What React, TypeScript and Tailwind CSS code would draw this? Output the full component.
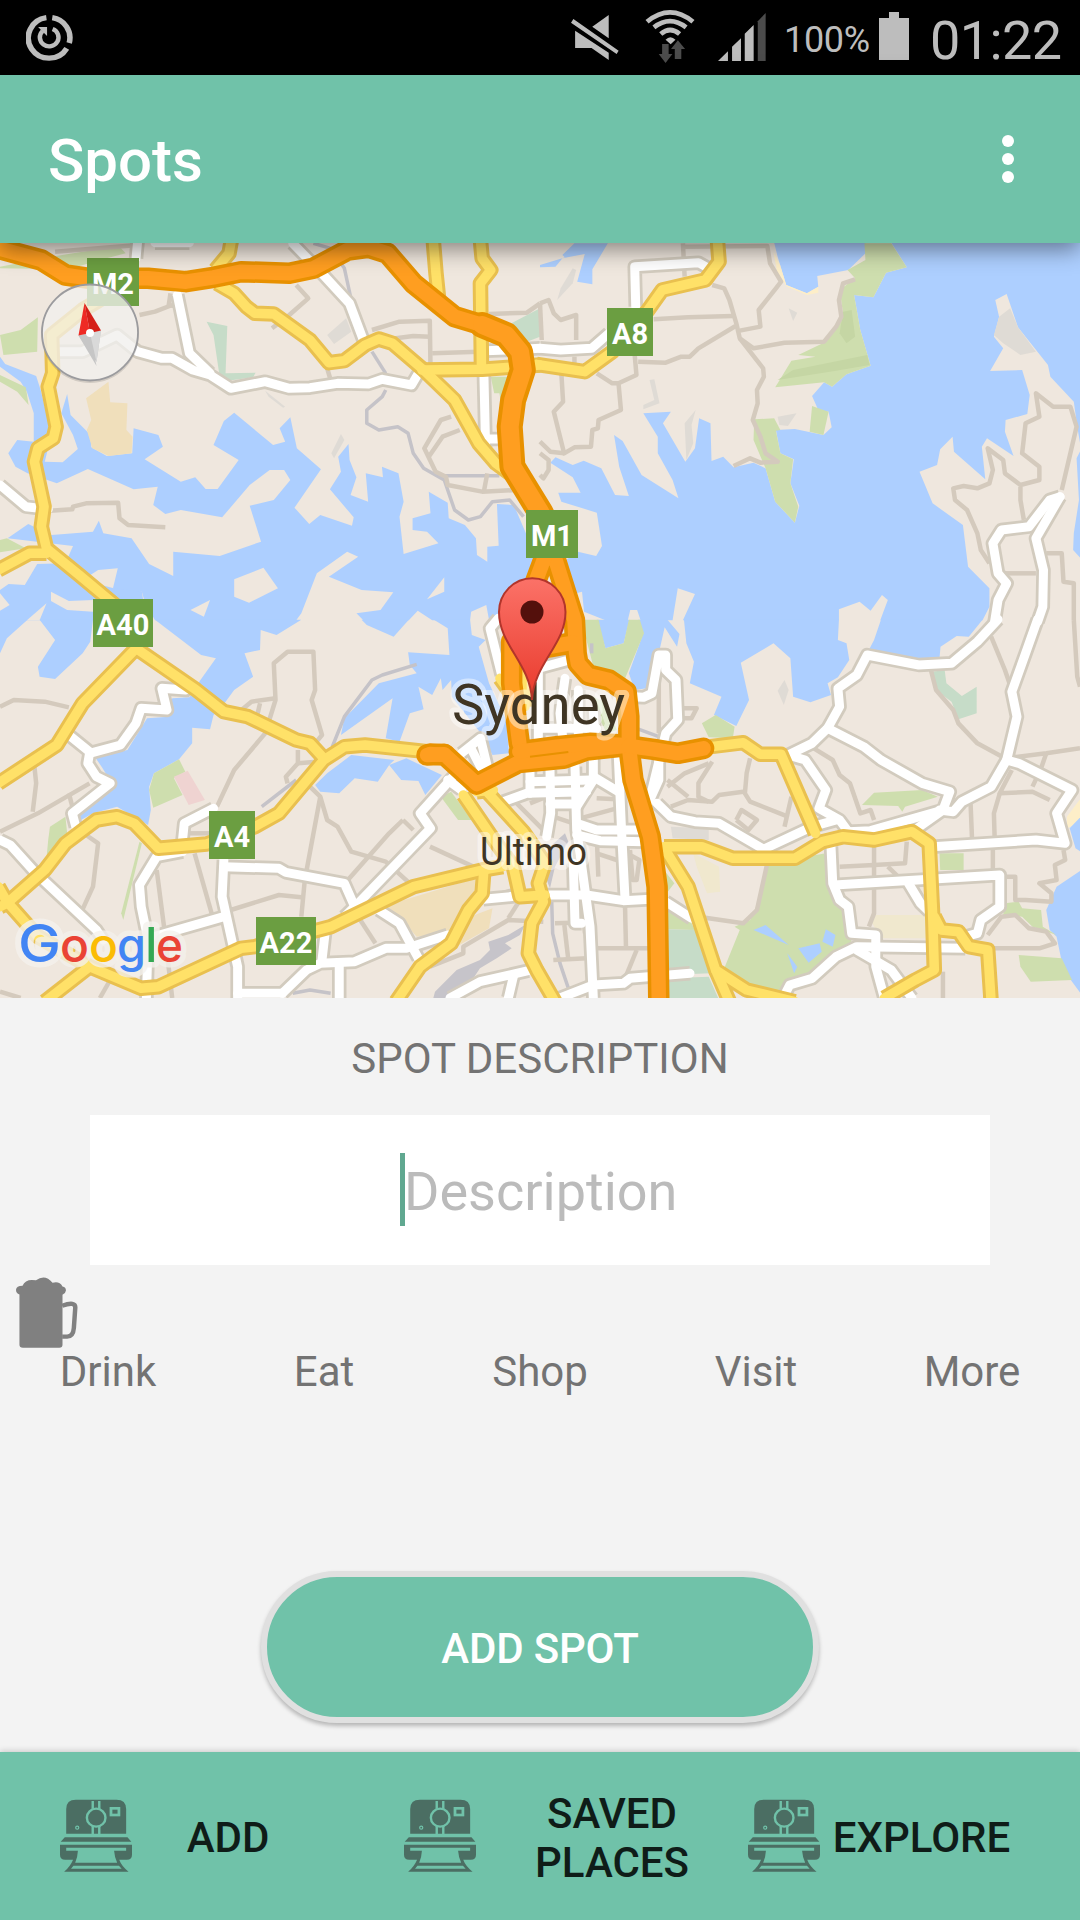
import React from "react";

type Quad = "nw" | "ne" | "sw" | "se" | "mid";
type Shape = [Quad, string, string];
type Line = [Quad, string];

/* The map is stored as four tiles of 1568 x 1140 units, plus a finer one for the city centre. */
const TILE: Record<Quad, string> = {
  nw: "translate(0 240) scale(.34439 .33333)",
  ne: "translate(540 240) scale(.34439 .33333)",
  sw: "translate(0 620) scale(.34439 .33333)",
  se: "translate(540 620) scale(.34439 .33333)",
  mid: "translate(430 600) scale(.33333)",
};

const LAND = "#efe7de";
const WATER = "#adcfff";
const PARK = "#cedeae";
const TEAL = "#c6dcc8";
const TAN = "#f0dfbb";
const GREY = "#dfdbd5";

const areas: Shape[] = [
  ["nw", WATER, "0,350 15,372 105,408 118,450 135,520 150,580 130,665 182,667 226,627 212,585 178,520 195,462 205,525 263,585 265,622 310,648 384,640 388,565 460,585 473,620 420,658 525,725 567,712 597,747 632,747 693,660 620,615 650,543 680,518 793,615 828,605 812,565 843,532 862,625 932,688 855,803 898,852 930,825 1022,857 1027,832 958,748 990,695 982,650 1012,612 1015,660 1035,712 1018,765 1069,785 1062,700 1112,712 1109,680 1157,700 1172,785 1160,830 1172,942 1273,910 1240,875 1198,870 1198,835 1250,820 1245,755 1300,788 1303,835 1350,855 1382,895 1385,945 1415,965 1415,920 1448,917 1443,792 1492,795 1527,880 1568,960 1568,1140 1420,1140 1412,1095 1368,1115 1365,1141 1255,1141 1213,1112 1187,1141 1055,1141 1035,1120 1105,1110 1142,1057 1050,1050 955,1010 1040,950 1008,935 920,1000 875,1120 860,1141 450,1141 420,1085 412,1055 355,1062 328,1045 342,985 285,990 240,1020 190,970 212,918 22,895 82,852 150,885 270,875 287,842 300,880 382,895 433,972 503,1008 503,935 638,948 758,905 725,797 795,780 843,720 825,690 783,690 725,735 645,832 525,810 480,822 445,795 458,740 388,748 255,687 165,730 80,700 45,680 24,640 50,600 98,605 98,520 78,455 60,425 0,380"],
  ["nw", WATER, "0,1050 25,1032 72,1035 108,972 190,970 240,1020 330,1045 412,1055 425,1141 0,1141"],
  ["nw", LAND, "135,1090 78,1141 115,1141"],
  ["nw", LAND, "148,1055 200,1083 270,1080 270,1115 195,1110 148,1083"],
  ["nw", LAND, "0,1060 28,1095 0,1112"],
  ["nw", LAND, "765,983 807,1045 723,1088 680,1070 680,1018"],
  ["nw", LAND, "610,1080 592,1130 553,1110"],
  ["nw", LAND, "1290,1012 1290,1055 1240,1078"],
  ["ne", WATER, "0,75 65,55 72,52 65,45 100,10 197,10 152,88 152,133 108,125 130,42 65,55 45,80 0,82"],
  ["ne", WATER, "678,0 690,50 715,135 775,160 808,140 805,108 895,90 945,40 945,0"],
  ["ne", WATER, "1015,0 1065,82 1005,98 968,172 912,165 930,270 960,377 890,403 848,440 825,427 790,468 808,510 838,515 847,562 823,585 740,567 685,570 698,640 737,658 727,730 753,797 740,848 683,785 655,685 620,668 562,682 532,650 498,663 495,550 462,535 450,625 422,665 357,550 380,515 300,520 342,590 342,640 385,720 402,775 295,705 240,603 215,585 230,680 258,768 218,765 178,685 127,662 95,675 45,652 30,668 95,712 118,758 53,758 62,785 165,818 180,918 163,948 110,935 75,960 105,1060 122,1055 128,1115 190,1141 255,1141 262,1110 282,1110 292,1141 385,1141 400,1045 450,1062 415,1141 868,1141 868,1108 928,1085 960,1112 993,1065 1010,1080 988,1141 1285,1141 1305,1100 1305,1045 1243,980 1228,855 1140,790 1102,695 1153,675 1162,628 1198,590 1202,635 1293,718 1283,620 1298,595 1375,648 1350,575 1352,540 1415,522 1422,465 1400,390 1307,393 1345,325 1318,290 1333,230 1322,180 1355,162 1388,262 1475,375 1482,410 1550,485 1560,560 1570,620 1570,0"],
  ["ne", WATER, "1570,630 1558,655 1565,780 1550,880 1548,930 1570,955"],
  ["ne", WATER, "0,960 30,965 10,1040 0,1040"],
  ["sw", WATER, "0,-1 80,-1 20,55 0,100"],
  ["sw", WATER, "115,-1 270,-1 262,65 240,100 160,177 115,170 110,140 160,60"],
  ["sw", WATER, "450,-1 584,105 627,115 582,180 550,232 500,235 490,290 427,295 370,390 275,410 295,440 325,490 232,585 235,600 270,580 340,560 430,615 438,570 433,500 447,460 520,418 558,370 558,323 610,328 620,285 655,245 680,210 735,170 710,100 755,90 757,30 803,45 875,-1"],
  ["sw", WATER, "1050,-1 1065,15 1143,50 1187,-1"],
  ["sw", WATER, "1260,-1 1300,25 1305,105 1185,97 1190,135 1210,160 1100,190 1000,295 990,345 1140,235 1120,355 1160,365 1190,280 1230,268 1215,200 1255,225 1280,175 1285,210 1310,180 1312,230 1400,345 1430,405 1478,400 1470,300 1420,190 1390,80 1410,60 1370,45 1365,-1"],
  ["sw", WATER, "915,495 930,515 985,520 1030,475 1097,485 1130,435 1165,480 1215,483 1235,525 1283,465 1180,415 1130,435 1145,420 1020,405 950,460"],
  ["se", WATER, "165,-1 190,85 243,70 260,-1"],
  ["se", WATER, "285,-1 370,-1 405,42 398,80 362,22 345,100 310,205 275,210 258,160 300,40"],
  ["se", WATER, "418,-1 425,70 447,125 435,190 527,230 505,285 570,318 607,240 583,128 678,70 727,115 735,230 785,247 845,225 835,190 865,172 898,120 890,70 865,60 868,-1"],
  ["se", WATER, "990,-1 970,60 950,100 1100,125 1160,115 1163,80 1210,48 1245,50 1285,-1"],
  ["se", "#fdeec8", "1570,535 1530,590 1530,625 1570,605"],
  ["se", WATER, "1570,590 1538,625 1555,685 1570,695"],
  ["se", WATER, "1570,752 1500,800 1470,870 1480,930 1500,950 1520,1050 1570,1120"],
  ["ne", "#fdeec8", "678,35 697,75 715,135 775,160 808,140 808,158 775,165 718,140 690,105"],
  ["nw", PARK, "0,80 150,50 345,18 365,40 290,60 200,88 0,85"],
  ["nw", PARK, "0,285 60,270 110,232 108,335 10,345"],
  ["nw", PARK, "0,405 75,442 83,495 50,455 0,425"],
  ["nw", PARK, "0,900 20,895 75,925 0,937"],
  ["nw", TEAL, "600,245 660,258 655,400 742,398 735,412 640,425 620,285"],
  ["nw", TEAL, "1485,250 1568,205 1568,290 1530,305"],
  ["nw", TAN, "315,425 320,487 370,490 367,570 385,590 382,640 315,648 268,625 252,570 265,540 250,475"],
  ["nw", PARK, "1425,410 1475,410 1470,490 1455,490 1450,460 1435,460"],
  ["nw", GREY, "950,285 1005,235 1020,275 970,312"],
  ["nw", GREY, "990,582 1000,600 970,655 962,640"],
  ["nw", GREY, "770,452 828,500 822,503 780,470"],
  ["ne", PARK, "942,10 1020,10 1065,82 1005,98 968,172 912,165 930,270 960,377 890,403 848,440 825,427 683,442 730,362 800,350 750,345 830,305 880,220 870,150 915,115 893,90 945,60"],
  ["ne", "#c5d6a4", "735,390 950,345 957,375 860,392 690,420"],
  ["ne", "#c5d6a4", "880,215 905,210 915,290 890,310 870,280"],
  ["ne", PARK, "790,498 838,515 823,585 783,575"],
  ["ne", PARK, "622,538 680,535 698,570 685,572 698,640 735,658 727,730 750,800 740,848 683,785 655,685 620,600"],
  ["ne", GREY, "1365,205 1388,262 1440,335 1395,345 1345,310 1318,285 1333,230"],
  ["ne", GREY, "95,85 105,90 95,130 50,180 60,145"],
  ["ne", GREY, "318,420 332,418 347,490 300,508 300,495 332,480"],
  ["ne", GREY, "452,510 440,555 445,610 425,660 420,550"],
  ["ne", GREY, "722,205 747,218 735,243"],
  ["ne", GREY, "690,530 745,520 720,558 695,555"],
  ["se", PARK, "120,-1 170,-1 190,85 243,70 258,-1 290,-1 302,40 245,180 160,160 140,80"],
  ["se", PARK, "470,310 510,285 565,320 560,355 490,352"],
  ["se", PARK, "935,555 970,518 1110,510 1155,530 1060,560 1052,575 1040,558"],
  ["se", PARK, "1160,700 1230,700 1230,750 1162,750"],
  ["se", PARK, "662,730 830,700 840,820 890,880 905,970 800,1060 710,1115 600,1095 535,1045 580,930 565,920 610,900 640,830"],
  ["se", PARK, "360,750 390,790 360,830"],
  ["se", PARK, "365,870 435,900 450,930 368,928"],
  ["se", TEAL, "368,928 450,930 495,1060 370,1065"],
  ["se", TEAL, "370,1075 490,1070 520,1140 370,1140"],
  ["se", PARK, "1390,1005 1515,1015 1545,1080 1425,1085 1395,1040"],
  ["se", PARK, "1350,850 1390,845 1400,865 1455,870 1460,920 1500,945 1430,920 1400,890 1345,885"],
  ["se", TEAL, "1138,155 1175,150 1180,190 1225,228 1268,200 1268,280 1215,298 1195,245 1150,210"],
  ["se", "#f0e8ce", "975,885 1120,885 1125,955 990,955 965,910"],
  ["se", "#f0e8ce", "445,700 520,740 523,815 485,820 455,740"],
  ["se", GREY, "380,620 490,625 490,660 385,655"],
  ["se", GREY, "710,180 722,210 708,255 690,212"],
  ["se", WATER, "620,930 655,915 722,975"],
  ["se", WATER, "820,965 830,928 858,945 850,980"],
  ["se", WATER, "750,985 812,970 818,995 780,1028"],
  ["se", WATER, "718,1000 747,1040 738,1060"],
  ["sw", PARK, "447,460 520,418 538,455 505,475 530,525 445,563 433,510"],
  ["sw", "#efd3d1", "505,470 545,452 595,540 548,555"],
  ["sw", PARK, "145,620 190,590 195,640 135,715 140,660"],
  ["sw", PARK, "405,665 412,670 358,900 352,880"],
  ["sw", PARK, "1280,530 1310,515 1370,600 1330,600"],
  ["sw", TAN, "1110,860 1380,775 1380,830 1310,935 1210,950 1160,890"],
  ["sw", TAN, "1340,900 1430,865 1420,925 1325,980"],
  ["mid", "#c6c4ca", "15,1175 80,1110 150,1080 180,1050 175,1025 235,1005 285,975 270,1005 225,1030 245,1045 200,1075 150,1105 120,1150 75,1165 60,1194 10,1194"],
  ["mid", "#c6c4ca", "360,740 405,700 415,725 375,800 360,865 350,840"],
  ["mid", PARK, "490,290 530,310 560,390 530,400 500,340"],
];

const minor: Line[] = [
  ["nw", "160,35 400,15"],
  ["nw", "405,225 450,215 500,195"],
  ["nw", "495,160 490,195 520,200"],
  ["nw", "860,135 895,175 840,225 790,265"],
  ["nw", "1080,270 1160,245 1248,242 1250,380"],
  ["nw", "1085,285 1110,300 1200,288 1248,290"],
  ["nw", "1255,340 1390,335"],
  ["nw", "1420,222 1530,218 1568,190"],
  ["nw", "950,385 960,420"],
  ["nw", "1310,530 1280,540 1232,625 1265,695 1295,710 1300,735 1400,755 1500,750"],
  ["nw", "1335,570 1285,590 1245,650"],
  ["nw", "1415,700 1405,755"],
  ["nw", "145,812 210,808 212,800 250,790 343,788 347,835 372,855 480,862"],
  ["ne", "415,10 420,110"],
  ["ne", "420,20 660,18 668,70 700,125 685,145 635,210 640,260 580,272"],
  ["ne", "500,135 535,145 550,180 570,250 580,295 620,325 710,308 825,305 860,260 875,230 868,180 880,130 915,118"],
  ["ne", "330,238 430,232 560,228"],
  ["ne", "568,258 460,325 435,350 410,350 365,368 285,365"],
  ["ne", "580,295 648,385 650,410 630,450 632,490 618,540 640,590 655,640 690,665 640,668 610,655 562,678"],
  ["ne", "275,345 280,405 228,430 235,510 170,540 168,565 152,570 148,620 100,622 70,640 40,515 67,485 62,400"],
  ["ne", "165,400 210,430 228,430"],
  ["ne", "0,190 25,180 40,220 60,240 105,225 105,300"],
  ["ne", "0,190 5,300"],
  ["ne", "0,605 30,635 70,640"],
  ["ne", "0,640 25,660 25,690 10,715 0,705"],
  ["ne", "100,350 100,380"],
  ["ne", "1515,750 1540,640 1558,560 1540,500 1490,500 1440,460 1450,530 1410,550 1400,640 1450,680 1450,720 1395,735 1350,700 1345,660 1300,625 1315,690 1305,730 1270,745 1230,738 1200,745 1205,780 1240,810 1270,880 1280,930 1305,970"],
  ["ne", "1395,740 1395,780 1405,840"],
  ["ne", "1470,940 1515,940 1520,1025 1550,1030 1550,1140"],
  ["ne", "1350,1000 1440,1000"],
  ["se", "1550,0 1560,170 1568,200"],
  ["se", "1310,50 1350,150 1370,210"],
  ["se", "1135,150 1150,210 1200,270 1215,310 1270,370 1350,415 1470,400 1568,385"],
  ["se", "795,385 850,420 870,465 900,490 930,580 960,570 970,600"],
  ["se", "1470,400 1455,445 1430,500"],
  ["se", "1370,450 1335,520 1430,515 1480,540"],
  ["se", "1335,520 1318,580 1320,650"],
  ["se", "1250,545 1255,670"],
  ["se", "970,665 970,735 1060,730 1065,665"],
  ["se", "870,740 970,735 970,780"],
  ["se", "970,800 970,880 955,920"],
  ["se", "1010,740 1050,780"],
  ["se", "610,415 600,460 595,520 610,545 720,590"],
  ["se", "380,560 430,540 500,545 520,525 590,515"],
  ["se", "500,425 460,490 460,530 490,545"],
  ["se", "370,500 420,460 490,430"],
  ["se", "370,480 430,530"],
  ["se", "570,600 585,570 630,600 605,630 570,600"],
  ["se", "730,530 710,620"],
  ["se", "660,730 630,870 590,910 460,890"],
  ["se", "410,265 455,265 440,295 410,295"],
  ["se", "345,190 345,340"],
  ["se", "1315,690 1315,760"],
  ["se", "1350,770 1380,770 1380,840 1410,840 1485,845 1485,820 1450,790 1500,780 1495,735 1525,720 1520,690"],
  ["se", "1300,945 1340,890 1380,885 1420,925 1470,935 1495,970 1450,985 1310,985"],
  ["se", "1170,1055 1170,1134"],
  ["mid", "585,915 588,1045"],
  ["mid", "490,1045 655,1045"],
  ["mid", "620,1050 585,1135"],
  ["mid", "370,1080 470,1075"],
  ["mid", "375,970 430,968"],
  ["mid", "403,975 415,1080"],
  ["mid", "500,595 560,598"],
  ["mid", "450,655 560,625"],
  ["mid", "600,750 608,840 620,840 628,780 600,765"],
  ["mid", "500,760 560,780"],
  ["mid", "500,700 505,830"],
  ["mid", "370,650 430,670"],
  ["mid", "455,900 465,1000"],
  ["mid", "0,1100 100,1060 100,1040 235,960 340,965"],
  ["mid", "235,955 270,900"],
  ["mid", "240,590 300,650 350,700"],
  ["mid", "300,610 350,590"],
  ["mid", "0,740 130,800"],
  ["mid", "215,880 250,870"],
  ["sw", "0,260 40,240 130,245 200,262"],
  ["sw", "100,440 105,490 95,575"],
  ["sw", "0,635 110,580 260,490"],
  ["sw", "200,520 210,560"],
  ["sw", "250,645 285,670 270,800 230,890"],
  ["sw", "540,640 610,640"],
  ["sw", "455,750 475,910 500,1134"],
  ["sw", "565,700 620,900"],
  ["sw", "630,560 680,450 770,340 800,240 795,130 835,95 910,95 915,210 905,240 935,345 915,370"],
  ["sw", "690,280 730,245 800,235"],
  ["sw", "755,250 745,295"],
  ["sw", "865,390 865,430 830,470 835,490"],
  ["sw", "865,430 920,425"],
  ["sw", "900,500 930,530 950,600 980,620 1020,695 1120,725 1190,790"],
  ["sw", "930,530 885,780 875,890"],
  ["sw", "1170,600 1130,640 1010,780"],
  ["sw", "1170,600 1200,630"],
  ["sw", "670,870 810,825 875,832"],
  ["sw", "1040,890 1090,970"],
  ["sw", "0,1115 60,1134"],
  ["sw", "320,1080 290,1134"],
];

const rail: Line[] = [
  ["nw", "910,10 960,25 1000,85 1020,180"],
  ["nw", "1080,335 1120,400"],
  ["nw", "1120,450 1110,470 1065,510 1065,550 1100,570 1155,560 1185,580 1200,640 1230,685 1290,720 1320,810 1360,840 1395,830 1430,785 1480,780 1520,830"],
  ["nw", "1270,707 1450,707"],
  ["sw", "965,380 1000,290 1080,180 1110,165 1210,133"],
  ["sw", "760,560 860,480"],
  ["sw", "850,1120 900,1110 960,1120"],
  ["se", "150,100 150,70"],
  ["se", "280,325 345,350"],
  ["mid", "365,900 368,1000 390,1090 425,1194"],
];

const white: Line[] = [
  ["nw", "160,335 240,335 340,285 400,335 470,355 500,355 560,390 610,405 670,445 770,425 840,445 900,443 980,430 1070,432 1110,418 1195,435 1215,400"],
  ["nw", "515,165 550,340 610,400"],
  ["nw", "850,10 930,95 1015,190 1055,300"],
  ["nw", "1405,400 1410,620"],
  ["nw", "1390,597 1450,597"],
  ["nw", "1410,332 1470,330 1568,325"],
  ["nw", "0,735 75,800 140,808"],
  ["nw", "400,0 395,55"],
  ["nw", "450,8 550,8"],
  ["ne", "0,325 60,330 150,325 200,280"],
  ["ne", "278,200 275,80 460,68 490,85"],
  ["ne", "1510,770 1480,780 1420,860 1340,870 1315,910 1330,1000 1355,1030 1330,1080 1320,1145"],
  ["ne", "1510,770 1440,895 1462,990 1460,1100 1445,1145"],
  ["se", "1445,-2 1410,100 1370,215 1385,290 1355,420 1310,500 1225,545 1200,575 1160,570"],
  ["se", "1330,-2 1270,65 1195,130 1100,135 950,105 920,165 865,205 870,260 835,325 790,370 720,405"],
  ["se", "835,325 940,380 990,420 1110,490 1190,515 1170,570 1095,625"],
  ["se", "720,405 770,420 830,510 810,565 870,600 895,635 960,632 1170,570"],
  ["se", "645,690 790,620 860,600"],
  ["se", "1355,420 1390,430 1545,510 1500,580 1525,670 1440,660 1140,680"],
  ["se", "845,680 850,790 870,840 895,860 905,940 975,945 975,1040 1000,1134"],
  ["se", "855,795 1335,765 1335,860 1280,900 1270,940 1235,950"],
  ["se", "1070,790 1105,850 1130,875"],
  ["se", "710,1125 725,1095 790,1075 860,1010 920,980 1235,985"],
  ["se", "920,990 1020,1050 1080,1134"],
  ["se", "340,550 380,590 450,605 520,610 645,685"],
  ["se", "365,845 440,895"],
  ["se", "325,510 365,340 400,300 395,180 365,150 365,105 345,105 325,220 300,232 270,230"],
  ["se", "345,400 345,480 310,560"],
  ["mid", "360,510 362,640 350,710"],
  ["mid", "435,500 440,690 450,760 480,980 490,1194"],
  ["mid", "430,790 435,970 455,970"],
  ["mid", "565,470 575,700 585,895"],
  ["mid", "490,460 490,540 440,620"],
  ["mid", "490,530 565,575"],
  ["mid", "300,510 300,580"],
  ["mid", "300,545 480,540"],
  ["mid", "220,605 290,580 470,575"],
  ["mid", "360,612 440,612"],
  ["mid", "440,670 500,690 640,690"],
  ["mid", "440,705 510,722 640,725"],
  ["mid", "160,898 260,888"],
  ["mid", "345,885 470,885 580,902 660,898"],
  ["mid", "60,1194 150,1145 295,1112"],
  ["mid", "250,1130 235,1194"],
  ["mid", "390,1194 490,1155 580,1150 600,1135 780,1120"],
  ["mid", "325,205 410,182"],
  ["mid", "325,210 325,430"],
  ["mid", "405,235 390,340 400,430"],
  ["mid", "445,270 445,430"],
  ["mid", "490,330 495,430"],
  ["mid", "330,385 500,385"],
  ["mid", "205,55 180,85 215,225"],
  ["sw", "555,190 540,210 470,205 485,270 410,265 395,310 350,375 260,400 255,430 280,470 320,490 210,580 220,620"],
  ["sw", "200,345 260,395"],
  ["sw", "0,660 30,675 100,755 280,930 300,960"],
  ["sw", "620,565 535,610 530,660"],
  ["sw", "530,695 455,710 405,795 410,860 430,960 425,1140"],
  ["sw", "650,720 645,830 690,1040 690,1140"],
  ["sw", "650,740 810,745 830,757 1000,790 1030,860"],
  ["sw", "430,955 650,890"],
  ["sw", "1000,890 1040,850 1250,625 1220,580 1320,465"],
  ["sw", "945,930 935,1020"],
  ["sw", "820,1120 890,1050 930,1030 1030,1025 1120,985 1180,985 1300,945"],
  ["sw", "1100,870 1160,910 1215,1015"],
  ["sw", "690,1120 820,1120"],
  ["sw", "985,1030 985,1134"],
  ["sw", "1300,480 1340,510"],
  ["sw", "1340,400 1395,355 1415,440"],
  ["sw", "1370,390 1400,450"],
];

const yellow: Line[] = [
  ["nw", "320,160 240,210 150,285 153,400 140,440 163,560 155,595 110,625 100,665 128,800 120,860 135,925 230,1005 340,1100 400,1160"],
  ["nw", "-5,990 85,940 135,940"],
  ["nw", "672,0 665,40 625,90"],
  ["nw", "630,130 680,160 715,200 740,220 795,222 900,300 955,368 1000,362 1060,315 1100,297 1140,310 1230,390 1320,480 1390,610 1440,670 1500,715"],
  ["nw", "1258,0 1266,100 1275,190"],
  ["nw", "1395,0 1400,55 1425,90 1395,130 1398,380"],
  ["nw", "1225,390 1400,388 1568,375"],
  ["ne", "-10,373 130,395 210,335 310,215 355,150 480,120 520,65 515,0"],
  ["sw", "395,85 240,250 165,375 -5,490"],
  ["sw", "395,85 570,210 650,275 720,290 860,360 900,370 940,415"],
  ["sw", "0,860 20,850 130,750 190,670 280,600 340,590 390,610 460,685 600,672 740,620 810,580 940,420 1000,380 1060,375 1240,395"],
  ["sw", "-5,800 20,845 110,950 260,1040 410,1105 460,1100 700,985 740,980 960,920 1200,800 1400,750 1460,740"],
  ["sw", "130,1145 260,1040"],
  ["sw", "1405,750 1400,820 1360,870 1310,970 1220,1040 1150,1145"],
  ["mid", "100,585 185,710 250,800 270,890 345,885"],
  ["mid", "175,580 280,695 325,760 345,790 325,850 340,905 305,970 295,1060 320,1110 375,1205"],
  ["mid", "140,575 190,570"],
  ["mid", "210,235 235,270"],
  ["mid", "285,220 285,320"],
  ["se", "495,380 590,368 640,403 700,403 800,640"],
  ["se", "360,680 470,680 560,715 740,715 820,665 880,650 970,660 1080,635 1130,670 1140,880 1145,1050 1090,1080 1000,1134"],
  ["se", "1145,890 1165,930 1215,935 1245,980 1300,990 1310,1145"],
  ["se", "370,700 430,800 510,1050 600,1110 740,1145"],
  ["se", "510,1050 550,1145"],
];

const orange: Line[] = [
  ["nw", "-5,25 120,60 190,105 260,115 430,115 540,125 620,112 700,95 840,100 910,85 1010,30 1070,22 1125,40 1200,130 1320,230 1410,258 1470,290"],
  ["se", "15,-190 45,-180 100,0 105,100 110,130 140,165 200,180 250,215 258,290 258,380 270,480 320,650 340,800 345,1145"],
  ["se", "25,-220 -40,-40 -60,60"],
  ["mid", "245,125 245,250 268,430"],
  ["mid", "0,462 45,465 140,552 265,488 400,475 470,450 580,438"],
  ["mid", "268,455 380,440 480,430 580,435"],
  ["se", "258,378 330,388 400,400 475,385"],
  ["sw", "1240,405 1290,403"],
  ["mid", "350,142 430,128"],
];

/* The freeway north of the bridge is drawn heavier. */
const freeway: Line[] = [
  ["nw", "1400,255 1470,285 1510,335 1518,390 1490,480 1480,560 1488,680 1568,815 1600,880"],
];

function Roads({ lines, color, width, cap = "butt" }: { lines: Line[]; color: string; width: number; cap?: "butt" | "round" }) {
  return (
    <g fill="none" stroke={color} strokeWidth={width} strokeLinejoin="round" strokeLinecap={cap}>
      {lines.map(([q, pts], i) => (
        <polyline key={i} points={pts} transform={TILE[q]} vectorEffect="non-scaling-stroke" />
      ))}
    </g>
  );
}

const shields = [
  { label: "M2", x: 87, y: 258, w: 52 },
  { label: "A8", x: 607, y: 308, w: 46 },
  { label: "M1", x: 526, y: 510, w: 52 },
  { label: "A40", x: 93, y: 599, w: 60 },
  { label: "A4", x: 209, y: 811, w: 46 },
  { label: "A22", x: 256, y: 917, w: 60 },
];

const google = [
  { c: "G", x: 18, w: 43, size: 52.5, fill: "#4285f4" },
  { c: "o", x: 60, w: 29, size: 46.5, fill: "#ea4335" },
  { c: "o", x: 89, w: 29, size: 46.5, fill: "#fbbc05" },
  { c: "g", x: 117, w: 29, size: 46.5, fill: "#4285f4" },
  { c: "l", x: 145, w: 12.5, size: 48, fill: "#34a853" },
  { c: "e", x: 156, w: 27, size: 46.5, fill: "#ea4335" },
];

function CityMap() {
  return (
    <svg viewBox="0 243 1080 755" className="block h-[755px] w-[1080px]" fontFamily="Roboto, sans-serif">
      <defs>
        <linearGradient id="pin" x1="0" y1="0" x2="0" y2="1">
          <stop offset="0" stopColor="#fb7268" />
          <stop offset="1" stopColor="#e93a2c" />
        </linearGradient>
      </defs>
      <rect x="0" y="243" width="1080" height="755" fill={LAND} />
      {areas.map(([q, fill, pts], i) => (
        <polygon key={i} points={pts} fill={fill} transform={TILE[q]} />
      ))}
      <Roads lines={rail} color="#c5c3c8" width={3.5} />
      <Roads lines={minor} color="#d4cabd" width={4.5} />
      <Roads lines={white} color="#d2cbbe" width={14.5} />
      <Roads lines={white} color="#ffffff" width={9} cap="round" />
      <Roads lines={yellow} color="#e9c04f" width={15.5} />
      <Roads lines={yellow} color="#ffe168" width={9.5} cap="round" />
      <Roads lines={orange} color="#e89100" width={21.5} cap="round" />
      <Roads lines={freeway} color="#e89100" width={26} cap="round" />
      <Roads lines={orange} color="#ff9e20" width={14.5} cap="round" />
      <Roads lines={freeway} color="#ff9e20" width={18} cap="round" />
      <Roads lines={[["mid", "300,470 415,456"]]} color="#e89100" width={2} />

      {shields.map((s) => (
        <g key={s.label}>
          <rect x={s.x} y={s.y} width={s.w} height="48" fill="#6b9e41" />
          <text x={s.x + s.w / 2} y={s.y + 36} fill="#fff" fontSize="29" fontWeight="700" textAnchor="middle">
            {s.label}
          </text>
        </g>
      ))}

      <g fill="#3f3524" stroke="#fff" strokeOpacity=".45" strokeWidth="10" strokeLinejoin="round" paintOrder="stroke">
        <text x="452" y="723.5" fontSize="56" textLength="173" lengthAdjust="spacingAndGlyphs">Sydney</text>
        <text x="480" y="864.5" fontSize="38" textLength="107" lengthAdjust="spacingAndGlyphs">Ultimo</text>
      </g>

      <path d="M532 700C530 663 499 645 499 612a33 33.500 0 0 1 66.500 0C565.500 645 534 663 532 700Z" fill="url(#pin)" stroke="#b2352b" strokeWidth="2" />
      <circle cx="532" cy="612" r="11.5" fill="#54100c" />

      <circle cx="90" cy="334" r="49" fill="#000" opacity=".12" />
      <circle cx="90" cy="332.5" r="48" fill="#fbfaf7" fillOpacity=".75" stroke="#9b9b9e" strokeWidth="1.8" />
      <path d="M78.500 335.500L96.500 366L90 333Z" fill="#c6c6c6" />
      <path d="M78.500 335.500L96.500 362L101 330.500Z" fill="#c6c6c6" />
      <path d="M90 333L96.500 362L101 330.500Z" fill="#d9d9d9" />
      <path d="M84.500 303L78.500 335.500L90 333Z" fill="#ee2a24" />
      <path d="M84.500 303L101 330.500L90 333Z" fill="#d51f18" />
      <circle cx="90" cy="333" r="4" fill="#fff" />

      <g fontFamily="Inter, sans-serif" fontWeight="500" stroke="#f4f1ec" strokeOpacity=".8" strokeWidth="11" strokeLinejoin="round">
        {google.map((l, i) => (
          <text key={i} x={l.x} y="961.5" fontSize={l.size} textLength={l.w} lengthAdjust="spacingAndGlyphs" fill="none">{l.c}</text>
        ))}
      </g>
      <g fontFamily="Inter, sans-serif" fontWeight="500" aria-hidden="true">
        {google.map((l, i) => (
          <text key={i} x={l.x} y="961.5" fontSize={l.size} textLength={l.w} lengthAdjust="spacingAndGlyphs" fill={l.fill}>{l.c}</text>
        ))}
      </g>
    </svg>
  );
}

function StatusBar() {
  return (
    <div className="flex h-[75px] items-start bg-black pl-[26px] text-[#bdbdbd]">
      <svg className="mt-[14px] h-[48px] w-[47px]" viewBox="75 42 136 144" preserveAspectRatio="none" fill="none" stroke="currentColor">
        <path d="M134 53A60 61 0 1 0 193 145M151 53A60 61 0 0 1 200 129" strokeWidth="16" />
        <path d="M123 93A27 27 0 1 0 152 87" strokeWidth="13" />
        <path d="M110 81H136V108Z" fill="currentColor" stroke="none" />
      </svg>
      <svg className="mt-[14px] ml-[498px] h-[47px] w-[48px]" viewBox="90 42 140 141" preserveAspectRatio="none" fill="currentColor">
        <path d="M152 80L200 45V115ZM102 92L200 158V180L150 144H102ZM97 57L229 152L223 162L90 68Z" />
      </svg>
      <svg className="mt-[9px] ml-[26px] h-[54px] w-[50px]" viewBox="304 27 146 162" preserveAspectRatio="none" fill="none" stroke="currentColor" strokeWidth="14">
        <path d="M310 65Q377 9 444 65M330 82Q377 45 424 82M350 102Q377 78 405 102" />
        <path d="M364 119Q378 104 393 119L379 133Z" fill="currentColor" stroke="none" />
        <path d="M354 132H373V162H384L364 189L344 162H354ZM400 121L421 147H410V177H391V147H380Z" fill="#4c4c4c" stroke="none" />
      </svg>
      <svg className="mt-[13px] ml-[23px] h-[48px] w-[48px]" viewBox="517 39 140 144" preserveAspectRatio="none" fill="currentColor">
        <path d="M517 183L546 154V183ZM558 183V140L584 115V183ZM595 183V101L621 75V183Z" />
        <path d="M633 183V64L656 39V183Z" fill="#4c4c4c" />
      </svg>
      <span className="mt-[19px] ml-[18px] w-[85px] whitespace-nowrap font-[Roboto,sans-serif] text-[36px] leading-[42px] tracking-[-0.3px]">100%</span>
      <svg className="mt-[12px] ml-[10px] h-[48px] w-[30px]" viewBox="984 36 87 144" preserveAspectRatio="none" fill="currentColor">
        <path d="M984 54H1013V36H1042V54H1071V180H984Z" />
      </svg>
      <span className="mt-[9px] ml-[21px] whitespace-nowrap font-[Roboto,sans-serif] text-[54px] leading-[63px] tracking-[-0.6px]">01:22</span>
    </div>
  );
}

function CameraIcon() {
  return (
    <svg className="h-[73px] w-[72px] shrink-0 -translate-y-px" viewBox="174 178 209 219" preserveAspectRatio="none" fill="#4b6e63">
      <path d="M192 282V208Q192 180 220 180H338Q366 180 366 208V282Z" />
      <path d="M188 293H370L381 306H176Z" />
      <path d="M174 315H383V345Q383 360 368 360H346Q352 378 373 396H186Q204 380 212 360H189Q174 360 174 345ZM192 324V333H226Q225 354 218 369H340Q332 350 331 333H366V324ZM213 378L206 387H353L345 378Z" fillRule="evenodd" />
      <g fill="none" stroke="#70c2a9" strokeWidth="7">
        <circle cx="279" cy="234" r="27" />
        <path d="M269 184V207M288 184V207M269 259V284M288 259V284" />
        <rect x="322" y="206" width="23" height="20" strokeWidth="8" />
        <circle cx="224" cy="264" r="4.500" strokeWidth="3.500" />
      </g>
    </svg>
  );
}

const categories = ["Drink", "Eat", "Shop", "Visit", "More"];

export default function App() {
  return (
    <div className="flex h-[1920px] w-[1080px] flex-col overflow-hidden bg-[#f3f3f3] font-[Roboto,sans-serif]">
      <StatusBar />
      <header className="relative z-10 flex h-[168px] items-center justify-between bg-[#70c2a9] pr-[66px] pl-[48px] shadow-[0_6px_22px_rgba(0,0,0,0.45)]">
        <h1 className="pt-[4px] text-[60px] leading-[70px] font-medium text-white">Spots</h1>
        <div className="flex flex-col gap-[6px]">
          <span className="size-[12px] rounded-full bg-white" />
          <span className="size-[12px] rounded-full bg-white" />
          <span className="size-[12px] rounded-full bg-white" />
        </div>
      </header>

      <CityMap />

      <main className="flex flex-1 flex-col items-center">
        <h2 className="mt-[36px] text-[42px] leading-[49px] text-[#737373]">SPOT DESCRIPTION</h2>
        <div className="mt-[32px] flex h-[150px] w-[900px] items-center bg-white pl-[310px]">
          <span className="-mt-[2px] h-[73px] w-[5px] bg-[#60a890]" />
          <span className="-ml-px pt-[3px] text-[54px] leading-[63px] text-[#bbbbbb]">Description</span>
        </div>
        <div className="relative mt-[82px] grid w-full grid-cols-5 text-center text-[42px] leading-[49px] text-[#737373]">
          {categories.map((name) => (
            <span key={name}>{name}</span>
          ))}
          <svg className="absolute -top-[71px] left-[16px] h-[73px] w-[62px]" viewBox="46 110 180 218" preserveAspectRatio="none" fill="#808080">
            <path d="M56 165Q46 162 46 151Q47 139 65 139Q74 117 104 123Q130 103 152 130Q172 124 181 141Q191 143 191 153Q190 162 181 166V315Q181 324 172 324H66Q56 324 56 315Z" />
            <path d="M180 199Q220 184 218 206L214 265Q212 292 193 291H180" fill="none" stroke="#808080" strokeWidth="13" />
          </svg>
        </div>
        <button className="mt-[175px] h-[152px] w-[558px] rounded-full border-[6px] border-[#e0e0e0] bg-[#70c2a9] pt-[2px] text-[42px] leading-[49px] font-medium tracking-[-0.2px] text-white shadow-[0_3px_4px_rgba(0,0,0,0.25)]">
          ADD SPOT
        </button>
      </main>

      <nav className="flex h-[168px] items-center bg-[#70c2a9] pl-[60px] text-center text-[42px] leading-[49px] font-medium text-[#0f1c18] shadow-[0_-1px_6px_rgba(0,0,0,0.18)]">
        <CameraIcon />
        <span className="w-[192px] pt-[3px]">ADD</span>
        <span className="w-[80px]" />
        <CameraIcon />
        <span className="w-[272px] pt-[4px]">
          SAVED
          <br />
          PLACES
        </span>
        <CameraIcon />
        <span className="w-[203px] pt-[3px]">EXPLORE</span>
      </nav>
    </div>
  );
}
